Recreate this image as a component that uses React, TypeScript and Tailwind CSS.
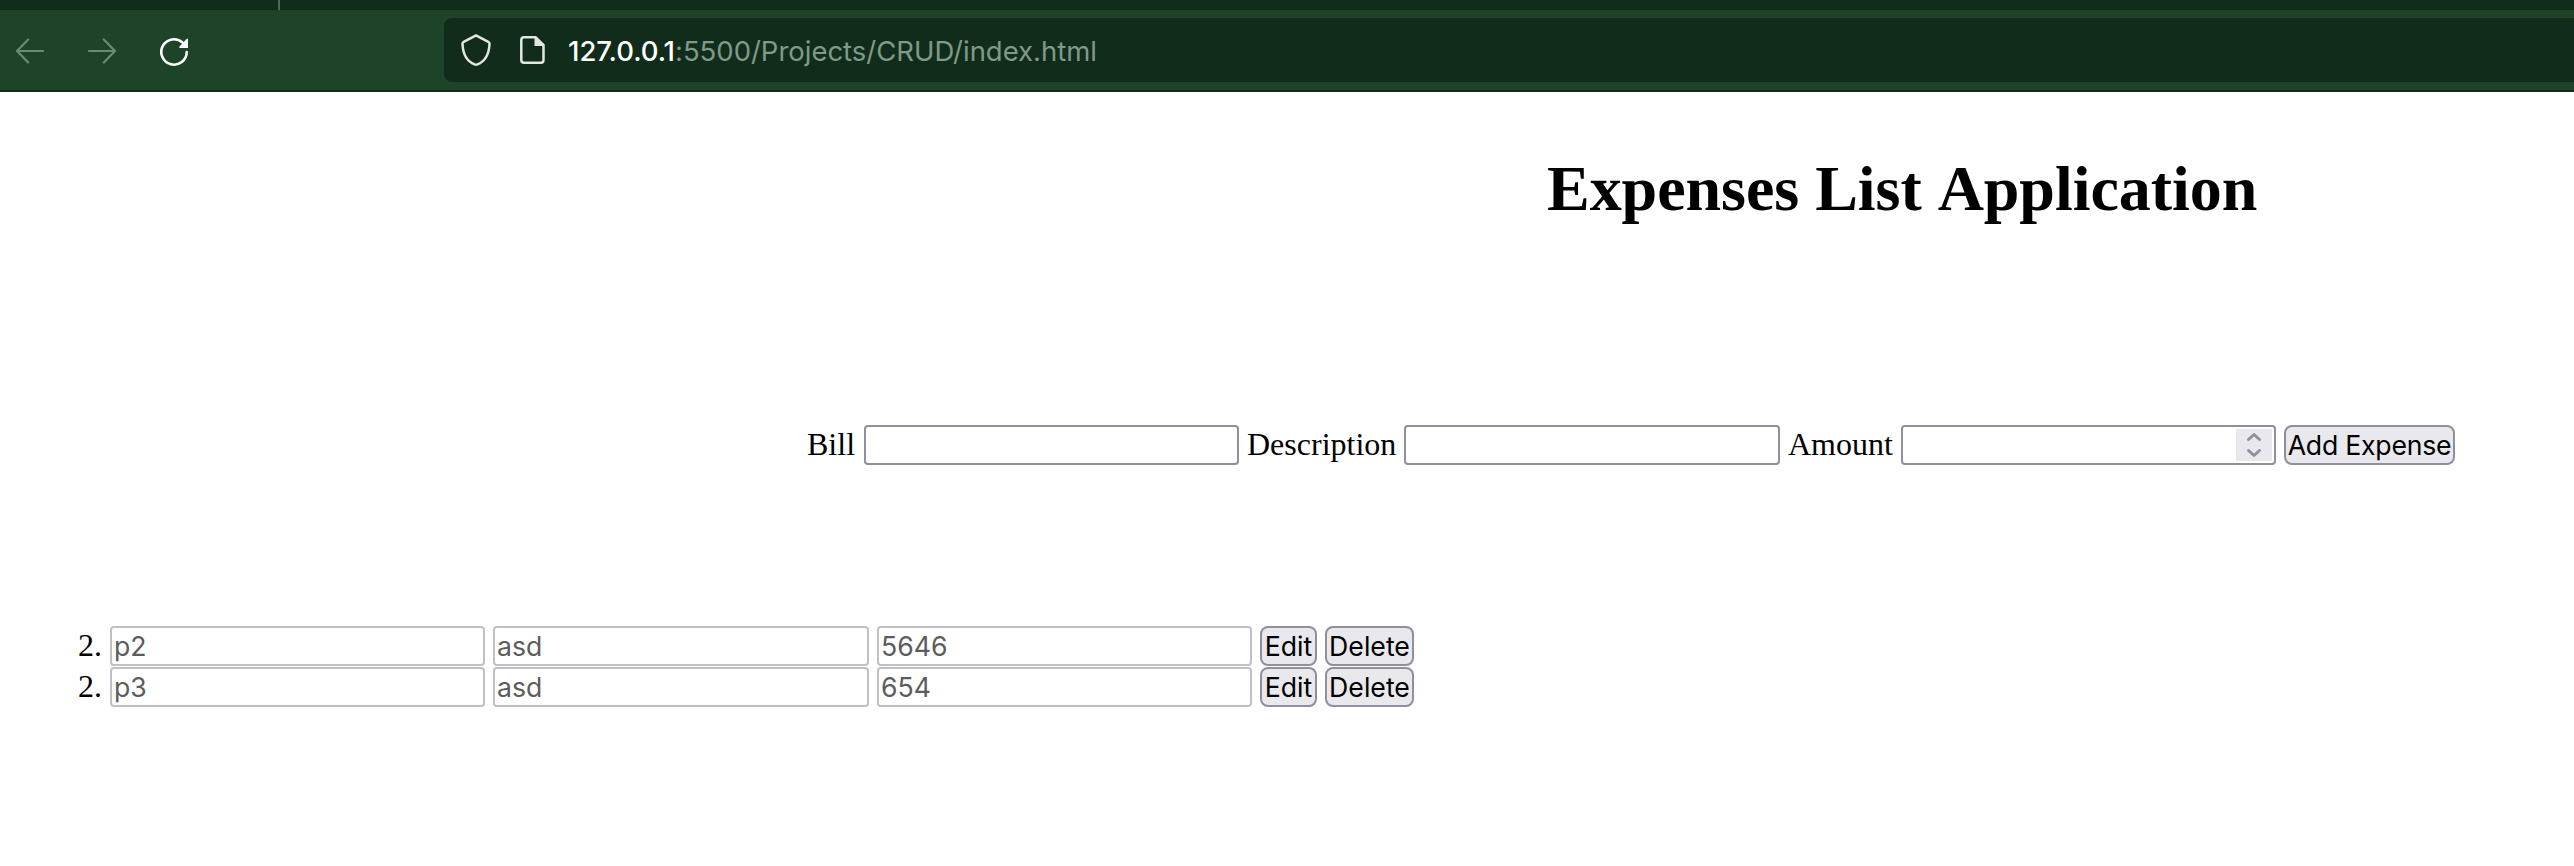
const rows = [
  { bill: "p2", description: "asd", amount: "5646" },
  { bill: "p3", description: "asd", amount: "654" },
];

function Field({ value, className }: { value?: string; className: string }) {
  return (
    <div className={`flex h-10 shrink-0 items-center rounded-[4px] border-2 bg-white pl-[2px] font-[Inter,sans-serif] text-[26.67px] leading-8 text-[#5c5c5c] ${className}`}>
      {value && <span>{value}</span>}
    </div>
  );
}

function Button({ label, className }: { label: string; className: string }) {
  return (
    <button className={`flex h-10 shrink-0 items-center justify-center whitespace-nowrap rounded-lg border-2 border-[#8f8f9d] bg-[#e9e9ed] font-[Inter,sans-serif] text-[26.67px] leading-8 text-black ${className}`}>
      {label}
    </button>
  );
}

export default function App() {
  return (
    <div className="flex h-[866px] w-[2574px] flex-col overflow-hidden bg-white font-['Liberation_Serif',serif] text-[32px] leading-9 text-black">
      <header className="flex h-[92px] shrink-0 flex-col border-b-2 border-[#112c1b] bg-[#1d4429]">
        <div className="flex h-[10px] bg-[#112c1b] pl-[278px]">
          <div className="h-full w-[2px] bg-[#4a6b57]" />
        </div>
        <nav className="flex h-20 items-center">
          <svg className="ml-4 h-8 w-7 shrink-0" viewBox="0 0 28 32" fill="none" stroke="#688b74" strokeWidth="2.2" strokeLinecap="round" strokeLinejoin="round">
            <path d="M27 17H1M12.2 5.5L1 17l11.2 11.5" />
          </svg>
          <svg className="ml-11 h-8 w-7 shrink-0" viewBox="0 0 28 32" fill="none" stroke="#688b74" strokeWidth="2.2" strokeLinecap="round" strokeLinejoin="round">
            <path d="M1 17h26M15.8 5.5L27 17 15.8 28.5" />
          </svg>
          <svg className="ml-11 h-8 w-7 shrink-0" viewBox="0 0 28 32" fill="none">
            <path d="M26.7 18A12.7 12.7 0 1 1 22.5 8.5" stroke="#fff" strokeWidth="2.6" strokeLinecap="round" />
            <path d="M28 5.3V14H20.5Q18.5 14 19.5 12.5L26.5 5Q28 4 28 5.3Z" fill="#fff" />
          </svg>
          <div className="ml-64 flex h-16 flex-1 items-center rounded-l-lg bg-[#112c1b]">
            <svg className="ml-[17px] h-8 w-[30px] shrink-0" viewBox="0 0 30 32" fill="none" stroke="#e1e6e3" strokeWidth="2.5" strokeLinejoin="round">
              <path d="M15 1.4L27.3 7.8Q28.6 8.5 28.5 10C28 20 24 27.5 16.4 30.4Q15 31 13.6 30.4C6 27.5 2 20 1.5 10Q1.4 8.5 2.7 7.8Z" />
            </svg>
            <svg className="ml-[29px] h-7 w-[25px] shrink-0" viewBox="0 0 25 28">
              <path d="M4 1.3H15.5L23.5 9V24Q23.5 26.7 21 26.7H4Q1.3 26.7 1.3 24V4Q1.3 1.3 4 1.3Z" fill="none" stroke="#e1e6e3" strokeWidth="2.5" />
              <path d="M14.5 1H16.5L24 8.5V10H14.5Z" fill="#e1e6e3" />
            </svg>
            <div className="ml-[23px] whitespace-nowrap pt-[2px] font-[Inter,sans-serif] text-[27.5px] leading-8 tracking-[-0.02px] text-[#7e9a88]">
              <span className="font-medium text-white">127.0.0.1</span>
              <span>:5500/Projects/CRUD/index.html</span>
            </div>
          </div>
        </nav>
      </header>
      <main className="flex flex-col">
        <h1 className="ml-[1547px] mt-[60px] h-[74px] whitespace-nowrap text-[64px] font-bold leading-[74px] tracking-[-0.04px] [font-kerning:none]">
          Expenses List Application
        </h1>
        <form className="ml-[807px] mt-[199px] flex h-10 items-center whitespace-nowrap">
          <label className="w-[57px] pb-[2px]">Bill</label>
          <Field className="w-[375px] border-[#8f8f9d]" />
          <label className="ml-2 w-[157px] pb-[2px]">Description</label>
          <Field className="w-[376px] border-[#8f8f9d]" />
          <label className="ml-2 w-[113px] pb-[2px]">Amount</label>
          <div className="flex h-10 w-[375px] justify-end rounded-[4px] border-2 border-[#8f8f9d] p-[2px]">
            <div className="flex w-9 items-center justify-center bg-[#e9e9ed]">
              <svg className="h-8 w-4" viewBox="0 0 16 32" fill="none" stroke="#8f8f9d" strokeWidth="3" strokeLinecap="round" strokeLinejoin="round">
                <path d="M2.5 10.5L8 5.5l5.5 5M2.5 21.5L8 26.5l5.5-5" />
              </svg>
            </div>
          </div>
          <Button label="Add Expense" className="ml-2 w-[171px] tracking-[-0.25px]" />
        </form>
        <ul className="ml-[78px] mt-[161px] flex flex-col gap-px">
          {rows.map((r) => (
            <li key={r.bill} className="flex h-10 items-center">
              <span className="w-8 pb-[2px]">2.</span>
              <Field value={r.bill} className="w-[375px] border-[#bfbfc7]" />
              <Field value={r.description} className="ml-2 w-[376px] border-[#bfbfc7]" />
              <Field value={r.amount} className="ml-2 w-[375px] border-[#bfbfc7]" />
              <Button label="Edit" className="ml-2 w-[57px]" />
              <Button label="Delete" className="ml-2 w-[89px]" />
            </li>
          ))}
        </ul>
      </main>
    </div>
  );
}
